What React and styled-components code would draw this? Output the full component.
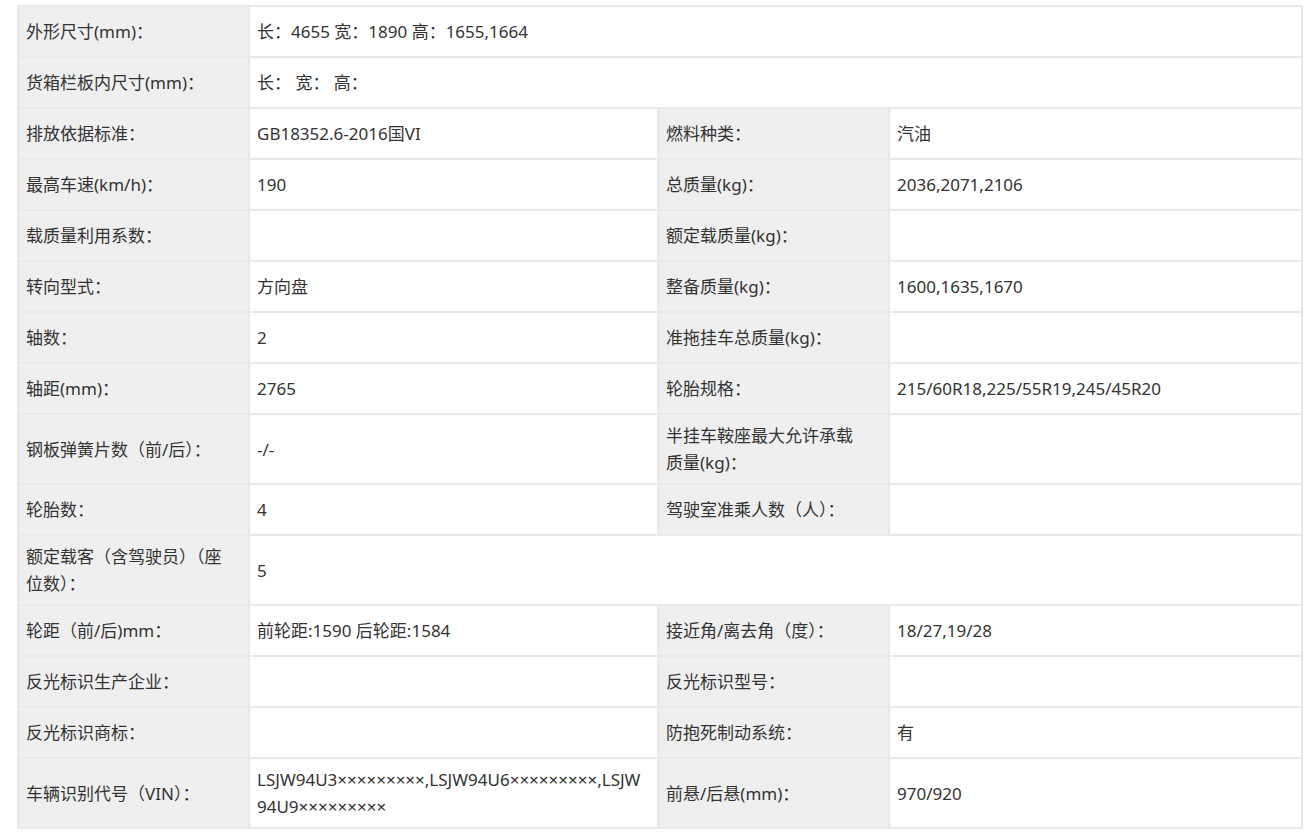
import React from "react";
import styled, { createGlobalStyle } from "styled-components";

const Global = createGlobalStyle`
  body { margin: 0; background: #fff; font-family: "Noto Sans", "Noto Sans CJK SC", sans-serif; }
`;

const Table = styled.table`
  margin: 5px 0 0 17px;
  width: 1284px;
  border-collapse: collapse;
  table-layout: fixed;
  font-size: 17px;
  color: #333;
`;

const Col = styled.col`
  width: ${({ $w }) => $w}px;
`;

const Cell = styled.td`
  border: 2px solid #e9e9e9;
  padding: 7px ${({ $label }) => ($label ? "22px" : "7px")} 7px 7px;
  line-height: 27px;
  height: 35px;
  vertical-align: middle;
  background: ${({ $label }) => ($label ? "#efefef" : "#fff")};
  word-break: break-all;
`;

const rows = [
  [["外形尺寸(mm)：", "长：4655 宽：1890 高：1655,1664"]],
  [["货箱栏板内尺寸(mm)：", "长： 宽： 高："]],
  [["排放依据标准：", "GB18352.6-2016国VI"], ["燃料种类：", "汽油"]],
  [["最高车速(km/h)：", "190"], ["总质量(kg)：", "2036,2071,2106"]],
  [["载质量利用系数：", ""], ["额定载质量(kg)：", ""]],
  [["转向型式：", "方向盘"], ["整备质量(kg)：", "1600,1635,1670"]],
  [["轴数：", "2"], ["准拖挂车总质量(kg)：", ""]],
  [["轴距(mm)：", "2765"], ["轮胎规格：", "215/60R18,225/55R19,245/45R20"]],
  [["钢板弹簧片数（前/后）：", "-/-"], ["半挂车鞍座最大允许承载质量(kg)：", ""]],
  [["轮胎数：", "4"], ["驾驶室准乘人数（人）：", ""]],
  [["额定载客（含驾驶员）（座位数）：", "5"]],
  [["轮距（前/后)mm：", "前轮距:1590 后轮距:1584"], ["接近角/离去角（度）：", "18/27,19/28"]],
  [["反光标识生产企业：", ""], ["反光标识型号：", ""]],
  [["反光标识商标：", ""], ["防抱死制动系统：", "有"]],
  [["车辆识别代号（VIN）：", "LSJW94U3×××××××××,LSJW94U6×××××××××,LSJW94U9×××××××××"], ["前悬/后悬(mm)：", "970/920"]],
];

export default function App() {
  return (
    <>
      <Global />
      <Table>
        <colgroup>
          <Col $w={231} />
          <Col $w={409} />
          <Col $w={231} />
          <Col $w={413} />
        </colgroup>
        <tbody>
          {rows.map((r, i) => (
            <tr key={i}>
              {r.map(([l, v], j) => (
                <React.Fragment key={j}>
                  <Cell $label>{l}</Cell>
                  <Cell colSpan={r.length === 1 ? 3 : 1}>{v}</Cell>
                </React.Fragment>
              ))}
            </tr>
          ))}
        </tbody>
      </Table>
    </>
  );
}
